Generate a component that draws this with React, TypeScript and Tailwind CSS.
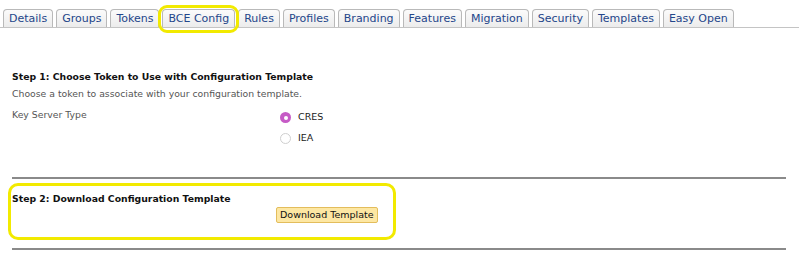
import React from 'react';

const tabs = ['Details', 'Groups', 'Tokens', 'BCE Config', 'Rules', 'Profiles', 'Branding', 'Features', 'Migration', 'Security', 'Templates', 'Easy Open'];

function Tab({ label }: { label: string }) {
    const highlighted = label === 'BCE Config';
    return (
        <div className={highlighted ? 'relative' : ''}>
            <div className="h-[18px] px-[5px] flex items-center rounded-t-[4px] border border-b-0 border-[#b9b9b9] bg-gradient-to-b from-[#fbfbfb] to-[#ececec] text-[11px] leading-none text-[#24468a]">
                {label}
            </div>
            {highlighted && (
                <div className="absolute -left-[4px] -right-[4px] -top-[4px] -bottom-[6px] rounded-[9px] border-[3px] border-[#f2ea00]"></div>
            )}
        </div>
    );
}

function Radio({ checked, label }: { checked?: boolean; label: string }) {
    return (
        <div className="flex items-center gap-[7px] h-[21px]">
            {checked ? (
                <span className="w-[11px] h-[11px] rounded-full bg-[#c65bc6] flex items-center justify-center">
                    <span className="w-[4px] h-[4px] rounded-full bg-white"></span>
                </span>
            ) : (
                <span className="w-[11px] h-[11px] rounded-full border border-[#cfcfcf] bg-white"></span>
            )}
            <span className="text-[9.5px] text-[#222]">{label}</span>
        </div>
    );
}

export default function App() {
    return (
        <div className="w-[799px] h-[258px] bg-white overflow-hidden" style={{ fontFamily: '"DejaVu Sans", Verdana, sans-serif' }}>
            <div className="pt-[9px] pl-[3px] flex items-end gap-[3px] border-b border-[#c4c4c4]">
                {tabs.map((t) => (
                    <Tab key={t} label={t} />
                ))}
            </div>

            <div className="pl-[12px] pr-[13px] pt-[42px]">
                <div className="text-[9.3px] font-bold text-[#111] leading-[14px]">Step 1: Choose Token to Use with Configuration Template</div>
                <div className="text-[9.3px] text-[#555] leading-[14px] mt-[3px]">Choose a token to associate with your configuration template.</div>
                <div className="flex mt-[6px]">
                    <div className="w-[268px] text-[9.3px] text-[#555] leading-[14px] pt-[1px]">Key Server Type</div>
                    <div className="flex flex-col">
                        <Radio checked label="CRES" />
                        <Radio label="IEA" />
                    </div>
                </div>

                <div className="mt-[28px] h-[2px] bg-[#8a8a8a]"></div>
            </div>

            <div className="ml-[8px] mt-[4px] w-[388px] h-[57px] rounded-[10px] border-[3px] border-[#f2ea00] pl-[1px] pt-[6px]">
                <div className="text-[9.3px] font-bold text-[#111] leading-[14px]">Step 2: Download Configuration Template</div>
                <div className="flex pl-[264px] mt-[1px]">
                    <button className="h-[16px] px-[3px] rounded-[2px] border border-[#e3bd5c] bg-[#fde7a3] text-[9.5px] leading-none text-[#111]">Download Template</button>
                </div>
            </div>

            <div className="mx-[12px] mr-[13px] mt-[8px] h-[2px] bg-[#8a8a8a]"></div>
        </div>
    );
}
